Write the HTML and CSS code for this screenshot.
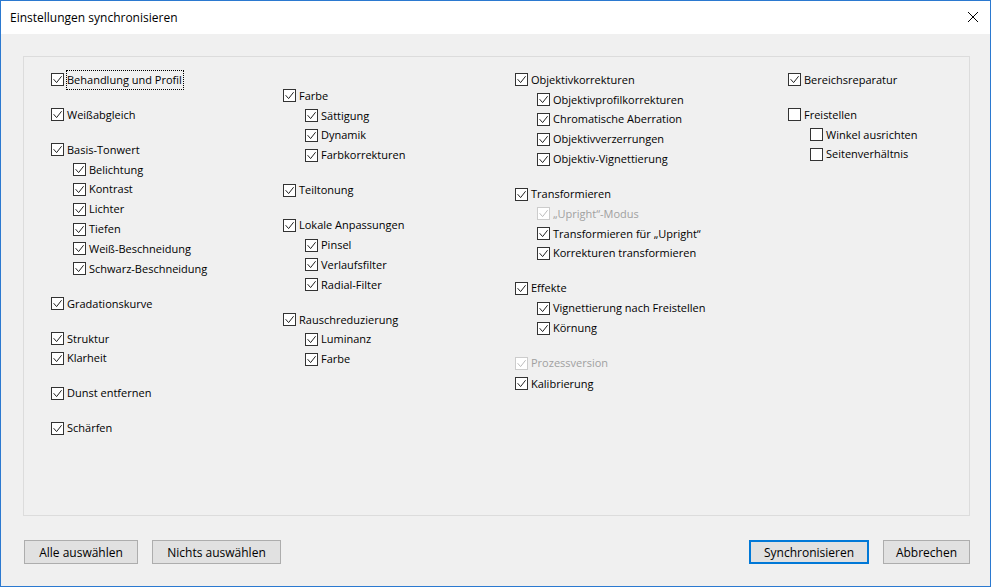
FILE: index.html
```html
<!DOCTYPE html>
<html lang="de">
<head>
  <meta charset="UTF-8">
  <title>Einstellungen synchronisieren</title>
  <link rel="stylesheet" href="styles.css">
</head>
<body>
  <div class="window">
    <div class="titlebar">
      <span class="title">Einstellungen synchronisieren</span>
      <svg class="close" width="12" height="12" viewBox="0 0 12 12">
        <path d="M1 1 L11 11 M11 1 L1 11" stroke="#000" stroke-width="1" fill="none"/>
      </svg>
    </div>

    <div class="content">
      <div class="panel">
        <!-- Spalte 1 -->
        <div class="col">
          <div class="group">
            <div class="row"><span class="cb on"></span><span class="label focus">Behandlung und Profil</span></div>
          </div>
          <div class="group">
            <div class="row"><span class="cb on"></span><span class="label">Weißabgleich</span></div>
          </div>
          <div class="group">
            <div class="row"><span class="cb on"></span><span class="label">Basis-Tonwert</span></div>
            <div class="row sub"><span class="cb on"></span><span class="label">Belichtung</span></div>
            <div class="row sub"><span class="cb on"></span><span class="label">Kontrast</span></div>
            <div class="row sub"><span class="cb on"></span><span class="label">Lichter</span></div>
            <div class="row sub"><span class="cb on"></span><span class="label">Tiefen</span></div>
            <div class="row sub"><span class="cb on"></span><span class="label">Weiß-Beschneidung</span></div>
            <div class="row sub"><span class="cb on"></span><span class="label">Schwarz-Beschneidung</span></div>
          </div>
          <div class="group">
            <div class="row"><span class="cb on"></span><span class="label">Gradationskurve</span></div>
          </div>
          <div class="group">
            <div class="row"><span class="cb on"></span><span class="label">Struktur</span></div>
            <div class="row"><span class="cb on"></span><span class="label">Klarheit</span></div>
          </div>
          <div class="group">
            <div class="row"><span class="cb on"></span><span class="label">Dunst entfernen</span></div>
          </div>
          <div class="group">
            <div class="row"><span class="cb on"></span><span class="label">Schärfen</span></div>
          </div>
        </div>

        <!-- Spalte 2 -->
        <div class="col col-offset">
          <div class="group">
            <div class="row"><span class="cb on"></span><span class="label">Farbe</span></div>
            <div class="row sub"><span class="cb on"></span><span class="label">Sättigung</span></div>
            <div class="row sub"><span class="cb on"></span><span class="label">Dynamik</span></div>
            <div class="row sub"><span class="cb on"></span><span class="label">Farbkorrekturen</span></div>
          </div>
          <div class="group">
            <div class="row"><span class="cb on"></span><span class="label">Teiltonung</span></div>
          </div>
          <div class="group">
            <div class="row"><span class="cb on"></span><span class="label">Lokale Anpassungen</span></div>
            <div class="row sub"><span class="cb on"></span><span class="label">Pinsel</span></div>
            <div class="row sub"><span class="cb on"></span><span class="label">Verlaufsfilter</span></div>
            <div class="row sub"><span class="cb on"></span><span class="label">Radial-Filter</span></div>
          </div>
          <div class="group">
            <div class="row"><span class="cb on"></span><span class="label">Rauschreduzierung</span></div>
            <div class="row sub"><span class="cb on"></span><span class="label">Luminanz</span></div>
            <div class="row sub"><span class="cb on"></span><span class="label">Farbe</span></div>
          </div>
        </div>

        <!-- Spalte 3 -->
        <div class="col">
          <div class="group">
            <div class="row"><span class="cb on"></span><span class="label">Objektivkorrekturen</span></div>
            <div class="row sub"><span class="cb on"></span><span class="label">Objektivprofilkorrekturen</span></div>
            <div class="row sub"><span class="cb on"></span><span class="label">Chromatische Aberration</span></div>
            <div class="row sub"><span class="cb on"></span><span class="label">Objektivverzerrungen</span></div>
            <div class="row sub"><span class="cb on"></span><span class="label">Objektiv-Vignettierung</span></div>
          </div>
          <div class="group">
            <div class="row"><span class="cb on"></span><span class="label">Transformieren</span></div>
            <div class="row sub disabled"><span class="cb on"></span><span class="label">„Upright“-Modus</span></div>
            <div class="row sub"><span class="cb on"></span><span class="label">Transformieren für „Upright“</span></div>
            <div class="row sub"><span class="cb on"></span><span class="label">Korrekturen transformieren</span></div>
          </div>
          <div class="group">
            <div class="row"><span class="cb on"></span><span class="label">Effekte</span></div>
            <div class="row sub"><span class="cb on"></span><span class="label">Vignettierung nach Freistellen</span></div>
            <div class="row sub"><span class="cb on"></span><span class="label">Körnung</span></div>
          </div>
          <div class="group group-last">
            <div class="row disabled"><span class="cb on"></span><span class="label">Prozessversion</span></div>
            <div class="row"><span class="cb on"></span><span class="label">Kalibrierung</span></div>
          </div>
        </div>

        <!-- Spalte 4 -->
        <div class="col">
          <div class="group">
            <div class="row"><span class="cb on"></span><span class="label">Bereichsreparatur</span></div>
          </div>
          <div class="group">
            <div class="row"><span class="cb"></span><span class="label">Freistellen</span></div>
            <div class="row sub"><span class="cb"></span><span class="label">Winkel ausrichten</span></div>
            <div class="row sub"><span class="cb"></span><span class="label">Seitenverhältnis</span></div>
          </div>
        </div>
      </div>

      <div class="buttons">
        <div class="btn-group">
          <button class="btn btn-all">Alle auswählen</button>
          <button class="btn btn-none">Nichts auswählen</button>
        </div>
        <div class="btn-group">
          <button class="btn btn-default btn-sync">Synchronisieren</button>
          <button class="btn btn-cancel">Abbrechen</button>
        </div>
      </div>
    </div>
  </div>
</body>
</html>
```

FILE: styles.css
```css
:root {
  --win-blue: #2b79d0;
  --face: #f0f0f0;
  --panel-line: #dcdcdc;
  --text: #000000;
  --muted: #a0a0a0;
}

* {
  box-sizing: border-box;
}

body {
  margin: 0;
  font-family: 'Open Sans', 'Noto Sans', sans-serif;
  font-size: 11px;
  color: var(--text);
  background: var(--face);
}

.window {
  width: 991px;
  height: 587px;
  border: 1px solid var(--win-blue);
  background: var(--face);
  display: flex;
  flex-direction: column;
}

.titlebar {
  height: 33px;
  background: #ffffff;
  display: flex;
  align-items: center;
  justify-content: space-between;
  padding: 0 11px 1px 9px;
  flex-shrink: 0;
}

.title {
  font-size: 12px;
}

.close {
  display: block;
}

.content {
  flex: 1;
  padding: 22px 20px 22px 22px;
  display: flex;
  flex-direction: column;
}

.panel {
  height: 460px;
  border: 1px solid var(--panel-line);
  padding: 13px 0 0 27px;
  display: grid;
  grid-template-columns: 232px 232px 273px 1fr;
}

.col-offset {
  margin-top: 16px;
}

.group {
  display: flex;
  flex-direction: column;
  margin-bottom: 15.2px;
}

.group-last .row + .row {
  margin-top: 1px;
}

.group-last {
  margin-top: 3px;
}

.row {
  height: 19.8px;
  display: flex;
  align-items: center;
}

.row.sub {
  padding-left: 22px;
}

.cb {
  width: 13px;
  height: 13px;
  border: 1px solid #333333;
  background: #ffffff;
  flex-shrink: 0;
  margin-right: 3px;
  position: relative;
}

.cb.on::after {
  content: "";
  position: absolute;
  left: 1px;
  top: 1px;
  width: 9px;
  height: 9px;
  background: url("data:image/svg+xml;utf8,<svg xmlns='http://www.w3.org/2000/svg' width='9' height='9' viewBox='0 0 9 9'><polyline points='0.6,4.2 3.6,7.6 8.6,1.2' fill='none' stroke='%23222' stroke-width='1'/></svg>") no-repeat;
}

.disabled .cb {
  border-color: #cccccc;
}

.disabled .cb.on::after {
  background: url("data:image/svg+xml;utf8,<svg xmlns='http://www.w3.org/2000/svg' width='9' height='9' viewBox='0 0 9 9'><polyline points='0.6,4.2 3.6,7.6 8.6,1.2' fill='none' stroke='%23bcbcbc' stroke-width='1'/></svg>") no-repeat;
}

.disabled .label {
  color: var(--muted);
}

.label {
  white-space: nowrap;
  line-height: 18px;
}

.label.focus {
  outline: 1px dotted #000000;
  outline-offset: 0;
  padding: 0 1px 0 0;
}

.buttons {
  margin-top: 24px;
  display: flex;
  justify-content: space-between;
  padding-left: 1px;
}

.btn-group {
  display: flex;
  gap: 14px;
}

.btn {
  height: 24px;
  font-family: inherit;
  font-size: 12px;
  color: var(--text);
  background: #e1e1e1;
  border: 1px solid #adadad;
  padding: 0;
  margin: 0;
}

.btn-default {
  border: 2px solid #0078d7;
}

.btn-all { width: 114px; }
.btn-none { width: 129px; }
.btn-sync { width: 120px; }
.btn-cancel { width: 87px; }
```
